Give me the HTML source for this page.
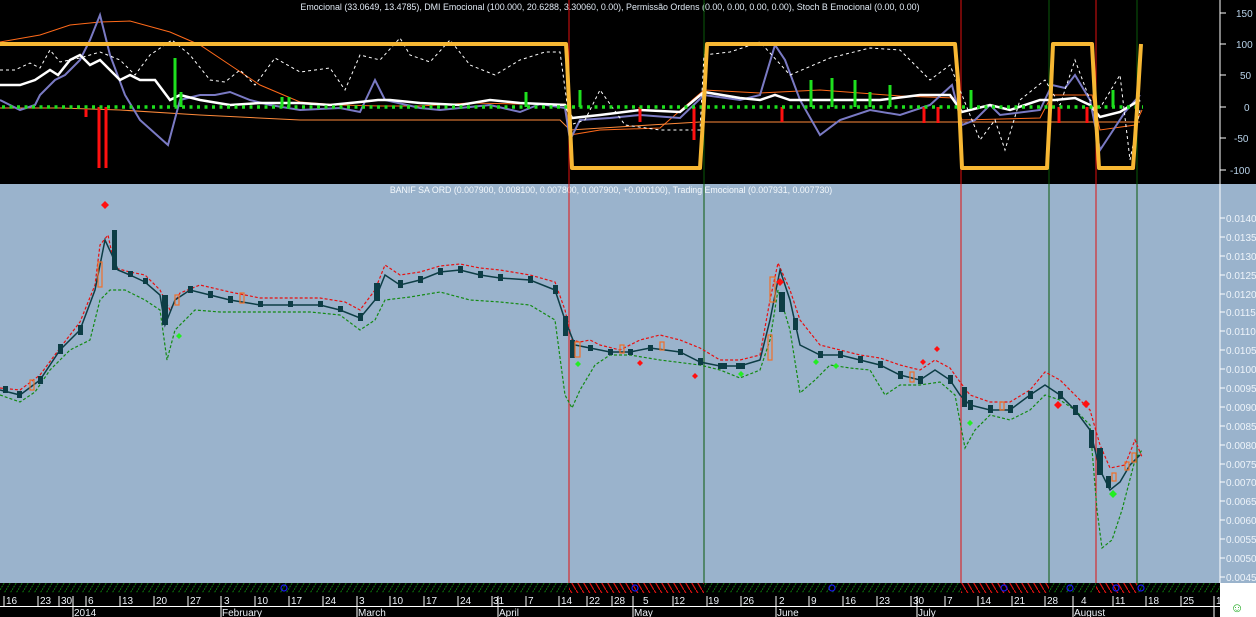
<!DOCTYPE html>
<html><head><meta charset="utf-8"><style>
html,body{margin:0;padding:0;background:#000;}
body{width:1256px;height:617px;overflow:hidden;position:relative;font-family:"Liberation Sans",sans-serif;}
svg{position:absolute;left:0;top:0;}
text{font-family:"Liberation Sans",sans-serif;}
</style></head><body>
<svg width="1256" height="617" viewBox="0 0 1256 617" xmlns="http://www.w3.org/2000/svg">
<defs>
<pattern id="hg" width="6" height="10" patternUnits="userSpaceOnUse"><line x1="0" y1="10" x2="6" y2="0" stroke="#0a7a0a" stroke-width="1" stroke-dasharray="2,1"/></pattern>
<pattern id="hr" width="6" height="10" patternUnits="userSpaceOnUse"><line x1="0" y1="0" x2="6" y2="10" stroke="#e01010" stroke-width="1.2"/></pattern>
</defs>
<rect x="0" y="0" width="1256" height="184" fill="#000"/>
<rect x="0" y="184" width="1256" height="399" fill="#9ab3cc"/>
<line x1="1220" y1="0" x2="1220" y2="583" stroke="#fff" stroke-width="1"/>
<g fill="#b9d3ea" font-size="10">
<text x="1236" y="17">150</text><text x="1236" y="48">100</text><text x="1240" y="79">50</text><text x="1244" y="111">0</text><text x="1234" y="142">-50</text><text x="1230" y="174">-100</text>
</g>
<g stroke="#fff" stroke-width="1">
<line x1="1220" y1="13" x2="1226" y2="13"/><line x1="1220" y1="44" x2="1226" y2="44"/><line x1="1220" y1="75" x2="1226" y2="75"/><line x1="1220" y1="107" x2="1226" y2="107"/><line x1="1220" y1="138" x2="1226" y2="138"/><line x1="1220" y1="170" x2="1226" y2="170"/>
</g>
<g fill="#eef4fa" font-size="10">
<text x="1226" y="222">0.0140</text><text x="1226" y="241">0.0135</text><text x="1226" y="260">0.0130</text><text x="1226" y="279">0.0125</text><text x="1226" y="298">0.0120</text><text x="1226" y="316">0.0115</text><text x="1226" y="335">0.0110</text><text x="1226" y="354">0.0105</text><text x="1226" y="373">0.0100</text><text x="1226" y="392">0.0095</text><text x="1226" y="411">0.0090</text><text x="1226" y="430">0.0085</text><text x="1226" y="449">0.0080</text><text x="1226" y="468">0.0075</text><text x="1226" y="486">0.0070</text><text x="1226" y="505">0.0065</text><text x="1226" y="524">0.0060</text><text x="1226" y="543">0.0055</text><text x="1226" y="562">0.0050</text><text x="1226" y="581">0.0045</text>
</g>
<g stroke="#fff"><line x1="1220" y1="218" x2="1225" y2="218"/><line x1="1220" y1="237" x2="1225" y2="237"/><line x1="1220" y1="256" x2="1225" y2="256"/><line x1="1220" y1="275" x2="1225" y2="275"/><line x1="1220" y1="294" x2="1225" y2="294"/><line x1="1220" y1="312" x2="1225" y2="312"/><line x1="1220" y1="331" x2="1225" y2="331"/><line x1="1220" y1="350" x2="1225" y2="350"/><line x1="1220" y1="369" x2="1225" y2="369"/><line x1="1220" y1="388" x2="1225" y2="388"/><line x1="1220" y1="407" x2="1225" y2="407"/><line x1="1220" y1="426" x2="1225" y2="426"/><line x1="1220" y1="445" x2="1225" y2="445"/><line x1="1220" y1="464" x2="1225" y2="464"/><line x1="1220" y1="482" x2="1225" y2="482"/><line x1="1220" y1="501" x2="1225" y2="501"/><line x1="1220" y1="520" x2="1225" y2="520"/><line x1="1220" y1="539" x2="1225" y2="539"/><line x1="1220" y1="558" x2="1225" y2="558"/><line x1="1220" y1="577" x2="1225" y2="577"/></g>

<text x="610" y="10" fill="#dfe8f2" font-size="8.9" text-anchor="middle">Emocional (33.0649, 13.4785), DMI Emocional (100.000, 20.6288, 3.30060, 0.00), Permissão Ordens (0.00, 0.00, 0.00, 0.00), Stoch B Emocional (0.00, 0.00)</text>
<text x="611" y="193" fill="#f4f8fc" font-size="8.8" text-anchor="middle">BANIF SA ORD (0.007900, 0.008100, 0.007800, 0.007900, +0.000100), Trading Emocional (0.007931, 0.007730)</text>

<g stroke-width="1">
<line x1="569" y1="0" x2="569" y2="583" stroke="#e01010"/>
<line x1="704" y1="0" x2="704" y2="583" stroke="#0a5a0a"/>
<line x1="961" y1="0" x2="961" y2="583" stroke="#e01010"/>
<line x1="1049" y1="0" x2="1049" y2="583" stroke="#0a5a0a"/>
<line x1="1096" y1="0" x2="1096" y2="583" stroke="#e01010"/>
<line x1="1137" y1="0" x2="1137" y2="583" stroke="#0a5a0a"/>
</g>

<polyline fill="none" stroke="#ff6a1a" stroke-width="1" points="0,42 40,35 70,25 100,22 130,21 170,32 200,45 230,65 260,85 300,102 340,105 380,106 420,106 470,103 520,104 565,104 570,135 600,130 660,128 704,90 760,93 820,90 900,96 955,98 962,120 1040,118 1052,95 1092,95 1100,130 1135,125 1142,110"/>
<polyline fill="none" stroke="#ff8a3a" stroke-width="1" points="0,108 60,108 120,110 200,115 300,120 400,120 560,120 570,130 650,125 700,122 900,122 1000,122 1100,122 1140,122"/>
<polyline fill="none" stroke="#7a7ac4" stroke-width="2" points="0,100 20,110 35,105 40,95 55,80 65,75 80,60 90,40 100,15 110,55 125,95 140,120 168,145 180,100 200,95 215,95 230,92 250,100 270,105 300,110 340,108 360,112 375,80 385,100 420,108 440,110 490,105 520,112 540,104 565,108 570,140 580,120 610,118 640,115 680,118 704,95 740,100 760,95 775,45 785,60 800,100 820,135 840,120 870,110 900,115 930,105 952,85 962,125 975,120 990,105 1000,115 1040,110 1052,85 1065,88 1075,75 1090,100 1100,150 1110,135 1125,112 1140,95"/>
<polyline fill="none" stroke="#fff" stroke-width="2.5" points="0,85 20,85 35,80 50,70 58,75 70,60 80,55 90,65 100,60 110,70 120,80 130,75 140,80 155,80 170,100 180,95 200,100 230,105 260,103 300,103 330,105 360,102 378,100 390,100 420,103 460,105 490,100 520,103 565,105 572,118 600,115 640,110 680,112 704,92 740,98 760,100 775,95 790,100 840,100 880,100 920,95 950,95 962,112 990,105 1010,110 1040,100 1055,100 1075,98 1090,105 1100,117 1120,112 1140,100"/>
<polyline fill="none" stroke="#fff" stroke-width="1" stroke-dasharray="3,3" points="0,70 15,70 30,63 40,68 50,50 60,62 80,58 100,52 120,60 135,75 150,55 172,40 190,55 210,80 225,82 240,70 255,85 275,58 300,72 330,68 345,90 360,55 380,60 400,38 410,55 430,62 450,40 470,65 495,75 520,60 545,52 560,52 570,125 585,120 600,90 625,125 660,130 700,130 704,55 730,52 760,42 790,75 830,58 870,48 900,50 930,80 950,65 962,95 980,140 995,120 1005,150 1020,100 1045,80 1060,105 1075,60 1090,100 1100,108 1120,75 1130,160 1140,110"/>
<g stroke-width="3">
<line x1="175" y1="107" x2="175" y2="58" stroke="#1ee01e"/><line x1="181" y1="107" x2="181" y2="92" stroke="#1ee01e"/>
<line x1="282" y1="107" x2="282" y2="97" stroke="#1ee01e"/><line x1="289" y1="107" x2="289" y2="97" stroke="#1ee01e"/>
<line x1="526" y1="107" x2="526" y2="92" stroke="#1ee01e"/><line x1="580" y1="107" x2="580" y2="90" stroke="#1ee01e"/>
<line x1="811" y1="107" x2="811" y2="80" stroke="#1ee01e"/><line x1="832" y1="107" x2="832" y2="78" stroke="#1ee01e"/><line x1="855" y1="107" x2="855" y2="80" stroke="#1ee01e"/><line x1="870" y1="107" x2="870" y2="92" stroke="#1ee01e"/><line x1="890" y1="107" x2="890" y2="85" stroke="#1ee01e"/>
<line x1="971" y1="107" x2="971" y2="90" stroke="#1ee01e"/><line x1="1113" y1="107" x2="1113" y2="90" stroke="#1ee01e"/>
<line x1="86" y1="107" x2="86" y2="117" stroke="#ff1010"/><line x1="99" y1="107" x2="99" y2="168" stroke="#ff1010"/><line x1="106" y1="107" x2="106" y2="168" stroke="#ff1010"/>
<line x1="640" y1="107" x2="640" y2="122" stroke="#ff1010"/><line x1="694" y1="107" x2="694" y2="140" stroke="#ff1010"/><line x1="782" y1="107" x2="782" y2="122" stroke="#ff1010"/>
<line x1="924" y1="107" x2="924" y2="123" stroke="#ff1010"/><line x1="938" y1="107" x2="938" y2="123" stroke="#ff1010"/><line x1="1059" y1="107" x2="1059" y2="123" stroke="#ff1010"/><line x1="1087" y1="107" x2="1087" y2="123" stroke="#ff1010"/>
</g>
<line x1="2" y1="107" x2="1143" y2="107" stroke="#1ee01e" stroke-width="3.5" stroke-dasharray="3,4.5"/>
<polyline fill="none" stroke="#f7b733" stroke-width="4" stroke-linejoin="round" points="0,44 566,44 567,60 572,168 700,168 703,120 707,44 955,44 958,80 962,168 1047,168 1050,110 1053,44 1092,44 1095,100 1099,168 1133,168 1137,110 1140,60 1141,44"/>

<polyline fill="none" stroke="#e81010" stroke-width="1.2" stroke-dasharray="3,2" points="0,388 20,390 40,375 60,348 80,322 95,285 100,245 108,235 115,268 130,272 145,275 160,290 170,310 180,293 200,285 230,292 260,298 290,298 320,298 345,302 360,310 375,290 385,265 400,275 420,272 440,266 460,264 480,268 500,270 530,275 555,282 565,310 572,340 580,342 590,340 600,345 620,350 640,340 660,335 680,340 700,348 720,360 740,360 760,355 770,300 778,263 790,290 800,320 820,345 840,350 860,355 880,358 900,365 920,370 935,360 950,368 960,382 970,395 990,402 1010,402 1030,390 1045,372 1060,380 1075,395 1090,410 1100,445 1110,468 1125,465 1135,440 1142,457"/>
<polyline fill="none" stroke="#138a13" stroke-width="1.2" stroke-dasharray="3,2" points="0,395 20,402 35,392 50,370 70,350 90,340 100,300 110,290 125,290 145,300 160,310 167,360 175,330 195,310 220,312 250,312 280,312 310,312 340,315 360,330 375,320 385,300 410,297 440,292 470,300 500,302 530,305 555,320 565,395 572,408 580,390 595,365 610,355 630,355 660,360 700,365 720,370 740,378 760,370 770,340 778,290 790,330 800,393 815,380 830,365 850,368 870,370 885,395 900,385 920,385 940,382 955,395 965,448 975,430 990,415 1010,420 1030,410 1045,395 1060,400 1075,410 1090,425 1097,510 1102,548 1112,540 1122,510 1135,460 1142,450"/>
<polyline fill="none" stroke="#0d3d45" stroke-width="1.5" points="0,390 20,395 40,380 60,350 80,330 95,290 105,240 112,255 118,270 130,275 145,282 160,295 165,325 175,300 190,290 210,295 230,300 260,305 290,305 320,305 340,310 360,318 375,300 385,275 400,285 420,280 440,272 460,270 480,275 500,278 530,280 555,290 565,320 575,345 590,348 610,352 630,352 650,348 680,352 700,362 720,366 740,366 760,360 770,320 780,270 790,300 800,345 820,355 840,355 860,360 880,365 900,375 920,380 935,370 950,380 960,395 970,405 990,410 1010,410 1030,395 1045,385 1060,395 1075,410 1090,430 1100,470 1110,490 1120,482 1130,465 1140,455"/>
<g fill="#0d3d45">
<rect x="3" y="386" width="5" height="7"/><rect x="17" y="391" width="5" height="7"/><rect x="38" y="376" width="5" height="8"/><rect x="58" y="344" width="5" height="10"/><rect x="78" y="325" width="5" height="10"/><rect x="128" y="271" width="5" height="6"/><rect x="143" y="278" width="5" height="6"/><rect x="188" y="286" width="5" height="7"/><rect x="208" y="291" width="5" height="7"/><rect x="228" y="296" width="5" height="7"/><rect x="258" y="301" width="5" height="6"/><rect x="288" y="301" width="5" height="6"/><rect x="318" y="301" width="5" height="6"/><rect x="338" y="306" width="5" height="6"/><rect x="358" y="313" width="5" height="8"/><rect x="398" y="280" width="5" height="8"/><rect x="418" y="276" width="5" height="7"/><rect x="438" y="268" width="5" height="7"/><rect x="458" y="266" width="5" height="7"/><rect x="478" y="271" width="5" height="7"/><rect x="498" y="274" width="5" height="7"/><rect x="528" y="276" width="5" height="7"/><rect x="553" y="285" width="5" height="9"/><rect x="588" y="345" width="5" height="6"/><rect x="608" y="349" width="5" height="6"/><rect x="628" y="349" width="5" height="6"/><rect x="648" y="345" width="5" height="6"/><rect x="678" y="349" width="5" height="6"/><rect x="698" y="358" width="5" height="7"/><rect x="718" y="363" width="9" height="6"/><rect x="736" y="363" width="9" height="6"/><rect x="818" y="351" width="5" height="7"/><rect x="838" y="351" width="5" height="7"/><rect x="858" y="356" width="5" height="7"/><rect x="878" y="361" width="5" height="7"/><rect x="898" y="371" width="5" height="8"/><rect x="918" y="376" width="5" height="8"/><rect x="948" y="375" width="5" height="9"/><rect x="968" y="400" width="5" height="10"/><rect x="988" y="405" width="5" height="8"/><rect x="1008" y="405" width="5" height="8"/><rect x="1028" y="391" width="5" height="8"/><rect x="1058" y="391" width="5" height="8"/><rect x="1073" y="405" width="5" height="10"/>
<rect x="112" y="230" width="5" height="40"/><rect x="162" y="295" width="6" height="30"/><rect x="374" y="283" width="6" height="18"/><rect x="563" y="316" width="5" height="20"/><rect x="570" y="340" width="5" height="18"/><rect x="779" y="292" width="6" height="20"/><rect x="793" y="318" width="5" height="12"/><rect x="962" y="387" width="5" height="20"/><rect x="1089" y="430" width="5" height="18"/><rect x="1097" y="448" width="6" height="27"/><rect x="1106" y="476" width="5" height="12"/>
</g>
<g fill="none" stroke="#f07028" stroke-width="1.2">
<rect x="98" y="262" width="4" height="25"/><rect x="575" y="342" width="5" height="15"/><rect x="770" y="277" width="5" height="25"/><rect x="768" y="335" width="4" height="25"/><rect x="1112" y="473" width="4" height="8"/><rect x="1125" y="462" width="4" height="8"/><rect x="1132" y="453" width="4" height="9"/>
<rect x="30" y="380" width="4" height="10"/><rect x="175" y="295" width="4" height="10"/><rect x="240" y="293" width="4" height="10"/><rect x="620" y="345" width="4" height="8"/><rect x="660" y="342" width="4" height="8"/><rect x="910" y="372" width="4" height="10"/><rect x="1000" y="402" width="4" height="8"/>
</g>
<g fill="#ff1010">
<path d="M105,201 l4,4 l-4,4 l-4,-4z"/><path d="M780,278 l4,4 l-4,4 l-4,-4z"/><path d="M640,360 l3,3 l-3,3 l-3,-3z"/><path d="M695,373 l3,3 l-3,3 l-3,-3z"/><path d="M923,359 l3,3 l-3,3 l-3,-3z"/><path d="M937,346 l3,3 l-3,3 l-3,-3z"/><path d="M1058,401 l4,4 l-4,4 l-4,-4z"/><path d="M1086,400 l4,4 l-4,4 l-4,-4z"/>
</g>
<g fill="#22ee22">
<path d="M578,361 l3,3 l-3,3 l-3,-3z"/><path d="M179,333 l3,3 l-3,3 l-3,-3z"/><path d="M741,371 l3,3 l-3,3 l-3,-3z"/><path d="M816,359 l3,3 l-3,3 l-3,-3z"/><path d="M836,363 l3,3 l-3,3 l-3,-3z"/><path d="M970,420 l3,3 l-3,3 l-3,-3z"/><path d="M1113,490 l4,4 l-4,4 l-4,-4z"/>
</g>

<rect x="0" y="583" width="1220" height="10" fill="#000"/>
<rect x="0" y="583" width="1220" height="10" fill="url(#hg)"/>
<rect x="569" y="583" width="135" height="10" fill="#000"/><rect x="569" y="583" width="135" height="10" fill="url(#hr)"/>
<rect x="961" y="583" width="88" height="10" fill="#000"/><rect x="961" y="583" width="88" height="10" fill="url(#hr)"/>
<rect x="1096" y="583" width="41" height="10" fill="#000"/><rect x="1096" y="583" width="41" height="10" fill="url(#hr)"/>
<g fill="none" stroke="#1a1aee" stroke-width="1.2"><circle cx="284" cy="588" r="3"/><circle cx="635" cy="588" r="3"/><circle cx="832" cy="588" r="3"/><circle cx="1004" cy="588" r="3"/><circle cx="1070" cy="588" r="3"/><circle cx="1116" cy="588" r="3"/><circle cx="1141" cy="588" r="3"/></g>
<rect x="0" y="593" width="1220" height="24" fill="#000"/>
<line x1="0" y1="606.5" x2="1220" y2="606.5" stroke="#fff"/>
<g font-size="10" fill="#eef2f8">
<text x="6" y="604">16</text><text x="40" y="604">23</text><text x="61" y="604">30</text><text x="88" y="604">6</text><text x="122" y="604">13</text><text x="156" y="604">20</text><text x="190" y="604">27</text><text x="224" y="604">3</text><text x="257" y="604">10</text><text x="291" y="604">17</text><text x="325" y="604">24</text><text x="359" y="604">3</text><text x="392" y="604">10</text><text x="426" y="604">17</text><text x="460" y="604">24</text><text x="493" y="604">31</text><text x="528" y="604">7</text><text x="561" y="604">14</text><text x="589" y="604">22</text><text x="614" y="604">28</text><text x="643" y="604">5</text><text x="674" y="604">12</text><text x="708" y="604">19</text><text x="743" y="604">26</text><text x="779" y="604">2</text><text x="811" y="604">9</text><text x="845" y="604">16</text><text x="879" y="604">23</text><text x="913" y="604">30</text><text x="947" y="604">7</text><text x="980" y="604">14</text><text x="1014" y="604">21</text><text x="1047" y="604">28</text><text x="1081" y="604">4</text><text x="1115" y="604">11</text><text x="1148" y="604">18</text><text x="1183" y="604">25</text><text x="1216" y="604">1</text>
<text x="74" y="616">2014</text><text x="222" y="616">February</text><text x="358" y="616">March</text><text x="499" y="616">April</text><text x="634" y="616">May</text><text x="777" y="616">June</text><text x="918" y="616">July</text><text x="1074" y="616">August</text>
</g>
<g stroke="#fff" stroke-width="1">
<line x1="4" y1="596" x2="4" y2="606"/><line x1="38" y1="596" x2="38" y2="606"/><line x1="59" y1="596" x2="59" y2="606"/><line x1="73" y1="596" x2="73" y2="617"/><line x1="86" y1="596" x2="86" y2="606"/><line x1="120" y1="596" x2="120" y2="606"/><line x1="154" y1="596" x2="154" y2="606"/><line x1="188" y1="596" x2="188" y2="606"/><line x1="221" y1="596" x2="221" y2="617"/><line x1="255" y1="596" x2="255" y2="606"/><line x1="289" y1="596" x2="289" y2="606"/><line x1="323" y1="596" x2="323" y2="606"/><line x1="357" y1="596" x2="357" y2="617"/><line x1="390" y1="596" x2="390" y2="606"/><line x1="424" y1="596" x2="424" y2="606"/><line x1="458" y1="596" x2="458" y2="606"/><line x1="492" y1="596" x2="492" y2="606"/><line x1="498" y1="596" x2="498" y2="617"/><line x1="526" y1="596" x2="526" y2="606"/><line x1="559" y1="596" x2="559" y2="606"/><line x1="587" y1="596" x2="587" y2="606"/><line x1="612" y1="596" x2="612" y2="606"/><line x1="633" y1="596" x2="633" y2="617"/><line x1="673" y1="596" x2="673" y2="606"/><line x1="707" y1="596" x2="707" y2="606"/><line x1="741" y1="596" x2="741" y2="606"/><line x1="776" y1="596" x2="776" y2="617"/><line x1="809" y1="596" x2="809" y2="606"/><line x1="843" y1="596" x2="843" y2="606"/><line x1="877" y1="596" x2="877" y2="606"/><line x1="911" y1="596" x2="911" y2="606"/><line x1="917" y1="596" x2="917" y2="617"/><line x1="945" y1="596" x2="945" y2="606"/><line x1="978" y1="596" x2="978" y2="606"/><line x1="1012" y1="596" x2="1012" y2="606"/><line x1="1045" y1="596" x2="1045" y2="606"/><line x1="1073" y1="596" x2="1073" y2="617"/><line x1="1113" y1="596" x2="1113" y2="606"/><line x1="1146" y1="596" x2="1146" y2="606"/><line x1="1181" y1="596" x2="1181" y2="606"/><line x1="1214" y1="596" x2="1214" y2="617"/>
</g>
<rect x="1220" y="583" width="36" height="34" fill="#fff"/>
<text x="1237" y="612" font-size="13" fill="#22aa22" text-anchor="middle">☺</text>
</svg>
</body></html>
